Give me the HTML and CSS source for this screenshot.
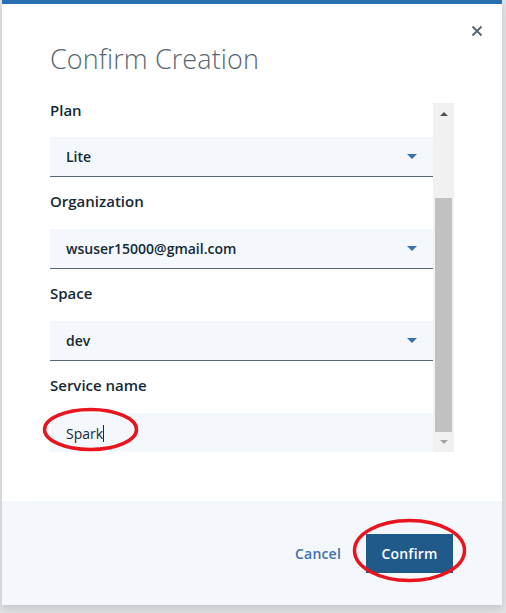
FILE: index.html
```html
<!DOCTYPE html>
<html>
<head>
<meta charset="utf-8">
<link rel="stylesheet" href="styles.css">
</head>
<body>
<div class="page">
  <div class="modal">
    <button class="close" aria-label="Close">
      <svg width="12" height="12" viewBox="0 0 12 12"><path d="M1.5 1.5 L10.5 10.5 M10.5 1.5 L1.5 10.5" stroke="#5a6872" stroke-width="2"/></svg>
    </button>
    <div class="body">
      <h1 class="title">Confirm Creation</h1>
      <div class="scroller">
        <div class="viewport">
          <div class="field">
            <div class="label first">Plan</div>
            <div class="select"><span>Lite</span><i class="caret"></i></div>
          </div>
          <div class="field">
            <div class="label">Organization</div>
            <div class="select"><span>wsuser15000@gmail.com</span><i class="caret"></i></div>
          </div>
          <div class="field">
            <div class="label">Space</div>
            <div class="select"><span>dev</span><i class="caret"></i></div>
          </div>
          <div class="field">
            <div class="label">Service name</div>
            <div class="input"><span>Spark</span><i class="cursor"></i></div>
          </div>
        </div>
        <div class="scrollbar">
          <i class="arrow-up"></i>
          <div class="track"><div class="thumb"></div></div>
          <i class="arrow-down"></i>
        </div>
      </div>
    </div>
    <div class="footer">
      <a class="cancel">Cancel</a>
      <button class="confirm">Confirm</button>
    </div>
  </div>
  <svg class="marks" width="506" height="613" viewBox="0 0 506 613">
    <ellipse cx="90.5" cy="429.5" rx="46" ry="20" fill="none" stroke="#e8141e" stroke-width="3.5"/>
    <ellipse cx="409.5" cy="550.5" rx="55" ry="30" fill="none" stroke="#e8141e" stroke-width="3.5"/>
  </svg>
</div>
</body>
</html>
```
FILE: styles.css
```css
* { box-sizing: border-box; }
html, body { margin: 0; padding: 0; }
body {
  background: #dfe3e6;
  font-family: "Open Sans", "Noto Sans", sans-serif;
  width: 506px;
  height: 613px;
  overflow: hidden;
}
.page { position: relative; width: 506px; height: 613px; }
.modal {
  position: relative;
  margin-left: 2px;
  width: 500px;
  height: 605px;
  background: #fff;
  border-top: 4px solid #2a6fb0;
  display: flex;
  flex-direction: column;
  box-shadow: 0 4px 8px rgba(0,0,0,0.12);
}
.close {
  position: absolute;
  top: 21px;
  right: 19px;
  width: 12px;
  height: 12px;
  padding: 0;
  border: 0;
  background: none;
  display: flex;
}
.body {
  flex: 1;
  padding: 0 0 0 48px;
}
.title {
  margin: 36px 0 0 0;
  font-weight: 300;
  font-size: 27px;
  line-height: 38px;
  color: #5a6872;
  letter-spacing: 0.1px;
}
.scroller {
  margin-top: 25px;
  width: 404px;
  height: 349px;
  display: flex;
  align-items: flex-start;
}
.viewport {
  margin-top: -5px;
  width: 383px;
  height: 354px;
  overflow: hidden;
}
.label {
  height: 52px;
  padding-top: 13px;
  font-size: 15px;
  line-height: 22px;
  font-weight: 600;
  color: #152935;
}
.label.first {
  height: 39px;
  padding-top: 2px;
  line-height: 20px;
}
.select, .input {
  height: 40px;
  background: #f4f7fb;
  display: flex;
  align-items: center;
  justify-content: space-between;
  padding: 0 16px 0 16px;
  font-size: 14px;
  font-weight: 600;
  color: #152935;
  border-bottom: 1px solid #5a6872;
}
.input {
  justify-content: flex-start;
  font-weight: 400;
  border-bottom: 0;
}
.caret {
  width: 0; height: 0;
  border-left: 5px solid transparent;
  border-right: 5px solid transparent;
  border-top: 5px solid #3d70b2;
}
.cursor {
  width: 1px;
  height: 17px;
  background: #152935;
}
.scrollbar {
  width: 21px;
  height: 349px;
  background: #f1f1f1;
  display: flex;
  flex-direction: column;
  align-items: center;
}
.arrow-up {
  margin-top: 9px;
  width: 0; height: 0;
  border-left: 4px solid transparent;
  border-right: 4px solid transparent;
  border-bottom: 4px solid #505050;
}
.track {
  flex: 1;
  width: 17px;
  padding-top: 82px;
  padding-bottom: 8px;
  display: flex;
  flex-direction: column;
}
.thumb { flex: 1; background: #c1c1c1; }
.arrow-down {
  margin-bottom: 8px;
  width: 0; height: 0;
  border-left: 4px solid transparent;
  border-right: 4px solid transparent;
  border-top: 4px solid #a3a3a3;
}
.footer {
  height: 104px;
  background: #f4f7fb;
  display: flex;
  align-items: center;
  justify-content: flex-end;
  padding-right: 49px;
  gap: 25px;
}
.cancel {
  font-size: 14px;
  font-weight: 600;
  color: #3d70b2;
  letter-spacing: 0.2px;
}
.confirm {
  width: 87px;
  height: 39px;
  border: 0;
  background: #1f5a8b;
  color: #fff;
  font-family: "Open Sans", "Noto Sans", sans-serif;
  font-size: 14px;
  font-weight: 600;
  letter-spacing: 0.2px;
  padding: 0;
}
.marks { position: absolute; left: 0; top: 0; pointer-events: none; }
```
